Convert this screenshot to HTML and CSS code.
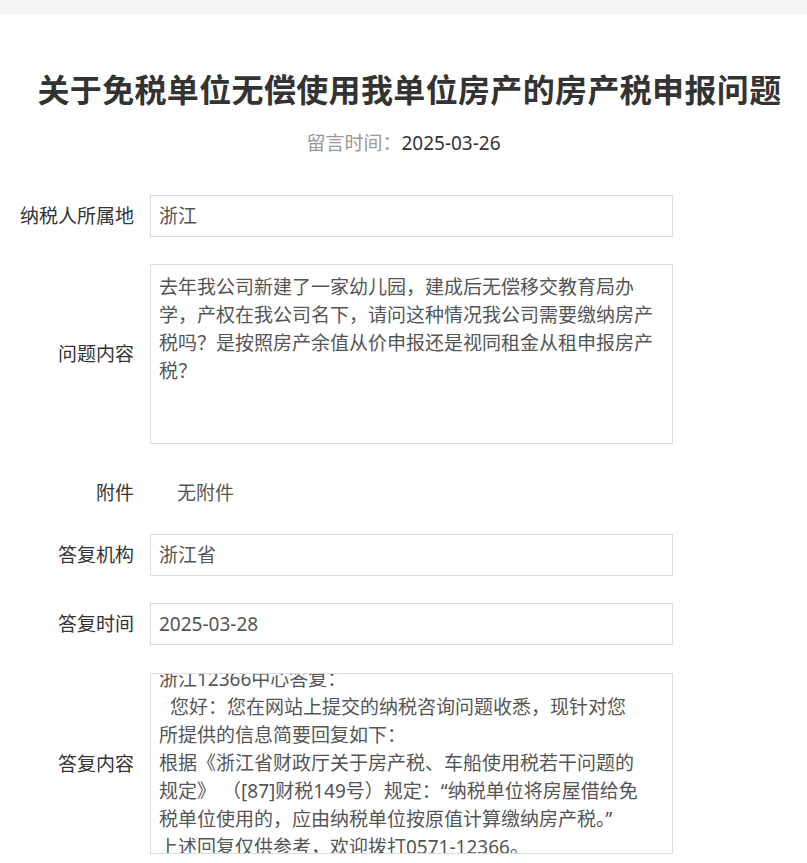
FILE: index.html
```html
<!DOCTYPE html>
<html lang="zh-CN">
<head>
<meta charset="utf-8">
<title>关于免税单位无偿使用我单位房产的房产税申报问题</title>
<link rel="stylesheet" href="styles.css">
</head>
<body>
<div class="topbar"></div>
<main class="page">
  <h1 class="title">关于免税单位无偿使用我单位房产的房产税申报问题</h1>
  <div class="meta"><span class="meta-label">留言时间：</span><span class="meta-value">2025-03-26</span></div>
  <div class="form">
    <div class="row">
      <div class="label">纳税人所属地</div>
      <div class="field input">浙江</div>
    </div>
    <div class="row">
      <div class="label label-mid">问题内容</div>
      <div class="field area"><div class="area-text">去年我公司新建了一家幼儿园，建成后无偿移交教育局办<br>学，产权在我公司名下，请问这种情况我公司需要缴纳房产<br>税吗？是按照房产余值从价申报还是视同租金从租申报房产<br>税？</div></div>
    </div>
    <div class="row row-plain">
      <div class="label">附件</div>
      <div class="plain">无附件</div>
    </div>
    <div class="row">
      <div class="label">答复机构</div>
      <div class="field input">浙江省</div>
    </div>
    <div class="row">
      <div class="label">答复时间</div>
      <div class="field input">2025-03-28</div>
    </div>
    <div class="row row-last">
      <div class="label label-mid">答复内容</div>
      <div class="field area area-reply"><div class="area-text scrolled">浙江12366中心答复：<br><span class="indent"></span>您好：您在网站上提交的纳税咨询问题收悉，现针对您<br>所提供的信息简要回复如下：<br>根据《浙江省财政厅关于房产税、车船使用税若干问题的<br>规定》<span class="gap"></span>（[87]财税149号）规定：“纳税单位将房屋借给免<br>税单位使用的，应由纳税单位按原值计算缴纳房产税。”<br>上述回复仅供参考，欢迎拨打0571-12366。</div></div>
    </div>
  </div>
</main>
</body>
</html>
```
FILE: styles.css
```css
html, body {
  margin: 0;
  padding: 0;
  background: #ffffff;
}
body {
  font-family: "Noto Sans", "Noto Sans CJK SC", sans-serif;
  color: #333333;
  font-size: 19px;
}
.topbar {
  height: 14px;
  background: #f4f5f7;
}
.page {
  padding-top: 52px;
}
.title {
  margin: 0;
  padding-left: 12px;
  font-family: "Noto Sans CJK SC", sans-serif;
  font-size: 32px;
  letter-spacing: 0.35px;
  line-height: 44px;
  font-weight: 700;
  color: #333333;
  text-align: center;
  white-space: nowrap;
}
.meta {
  margin-top: 19px;
  text-align: center;
  line-height: 28px;
}
.meta-label {
  color: #999999;
}
.meta-value {
  color: #333333;
}
.form {
  margin-top: 38px;
  display: flex;
  flex-direction: column;
  gap: 27px;
}
.row {
  display: grid;
  grid-template-columns: 134px 523px;
  column-gap: 16px;
  align-items: center;
}
.row-last {
  margin-top: 1px;
}
.label {
  text-align: right;
  white-space: nowrap;
  line-height: 28px;
  color: #333333;
}
.field {
  box-sizing: border-box;
  border: 1px solid #dddddd;
  background: #ffffff;
  color: #555555;
}
.input {
  height: 42px;
  line-height: 40px;
  padding: 0 8px;
}
.area {
  height: 180px;
  overflow: hidden;
}
.area-reply {
  height: 181px;
}
.area-text {
  padding: 8px 8px 0 8px;
  line-height: 28px;
}
.scrolled {
  padding-top: 0;
  margin-top: -9px;
  white-space: nowrap;
}
.indent {
  display: inline-block;
  width: 11px;
}
.gap {
  display: inline-block;
  width: 6px;
}
.row-plain {
  height: 36px;
  align-items: end;
}
.plain {
  padding-left: 27px;
  line-height: 28px;
  color: #555555;
}
```
